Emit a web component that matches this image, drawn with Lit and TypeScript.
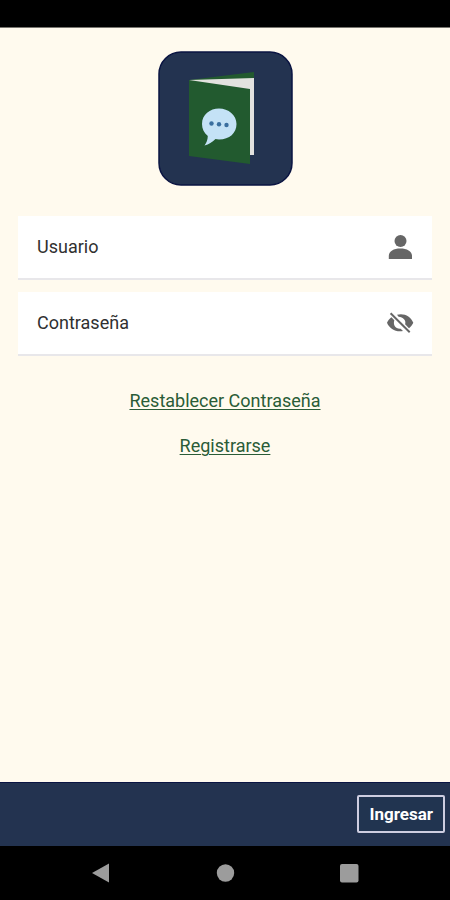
import { LitElement, html, css } from "lit";
import { customElement, state } from "lit/decorators.js";

@customElement("app-root")
export class AppRoot extends LitElement {
  @state() private passwordVisible = false;

  static styles = css`
    :host {
      display: flex;
      flex-direction: column;
      min-height: 100vh;
      background: #fffaee;
      color: #303030;
      font-family: Roboto, "Liberation Sans", sans-serif;
      font-size: 18px;
      line-height: 24px;
    }
    * {
      box-sizing: border-box;
    }
    .status {
      height: 28px;
      background: #000;
      border-bottom: 1px solid #77756f;
    }
    main {
      flex: 1;
      display: flex;
      flex-direction: column;
      align-items: center;
      padding: 23px 18px 24px;
    }
    .logo {
      display: block;
      width: 135px;
      height: 135px;
    }
    form {
      width: 100%;
      display: flex;
      flex-direction: column;
      gap: 12px;
      margin-top: 30px;
    }
    .field {
      display: flex;
      align-items: center;
      gap: 12px;
      height: 64px;
      padding: 0 18px 0 19px;
      background: #fff;
      border-bottom: 2px solid #e8e7ea;
    }
    .field input {
      flex: 1;
      min-width: 0;
      height: 32px;
      padding: 0;
      border: 0;
      outline: 0;
      background: none;
      color: inherit;
      font: inherit;
    }
    .icon {
      display: block;
      width: 28px;
      height: 28px;
      fill: #666;
    }
    .toggle {
      padding: 0;
      border: 0;
      background: none;
      cursor: pointer;
    }
    nav {
      display: flex;
      flex-direction: column;
      align-items: center;
      gap: 21px;
      margin-top: 33px;
    }
    a {
      color: #2a5c37;
      text-decoration: underline;
      text-decoration-thickness: 1px;
      text-underline-offset: 2px;
    }
    .actions {
      display: flex;
      justify-content: flex-end;
      align-items: center;
      height: 64px;
      padding: 0 5px 2px;
      background: #233350;
      border-top: 1px solid #0a1442;
    }
    .submit {
      height: 38px;
      padding: 0 10px;
      border: 2px solid #cdcde0;
      border-radius: 2px;
      background: #213450;
      color: #fff;
      font: bold 17px/20px Roboto, "Liberation Sans", sans-serif;
      cursor: pointer;
    }
    .system {
      display: grid;
      grid-template-columns: repeat(3, 1fr);
      align-items: center;
      height: 54px;
      padding: 0 39px;
      background: #000;
    }
    .key {
      display: flex;
      justify-content: center;
      padding: 0;
      border: 0;
      background: none;
    }
    .glyph {
      display: block;
      width: 20px;
      height: 20px;
      fill: #9c9c9c;
    }
  `;

  private togglePassword() {
    this.passwordVisible = !this.passwordVisible;
  }

  render() {
    return html`
      <div class="status"></div>
      <main>
        <svg class="logo" viewBox="0 0 135 135" aria-hidden="true">
          <rect x="1" y="1" width="133" height="133" rx="22" fill="#233350" stroke="#0a1442" stroke-width="1.5" />
          <path d="M31 29 96 21V30L84 34z" fill="#225a2f" />
          <path d="M31 29 96 27V104H88L60 60z" fill="#e2e2df" />
          <path d="M31 29 92 38V113L31 105z" fill="#225a2f" />
          <path d="M61 57.500c9.500 0 17.500 6.500 17.500 15.500s-7 15.500-17.500 15.500c-1.500 0-2.500-.1-3.500-.4C54 91.500 51 93.500 46.500 94.500c2.200-3 3.200-6 3.300-9.500-3.700-3-5.800-7-5.800-12C44 63.500 52 57.500 61 57.500z" fill="#c4e2f6" />
          <g fill="#3a6f9f">
            <circle cx="53.500" cy="72.500" r="2.200" />
            <circle cx="61" cy="73.300" r="2.200" />
            <circle cx="68.500" cy="74" r="2.200" />
          </g>
        </svg>
        <form id="login" @submit=${(e: Event) => e.preventDefault()}>
          <div class="field">
            <label for="user">Usuario</label>
            <input id="user" type="text" autocomplete="username" />
            <svg class="icon" viewBox="0 0 28 28" aria-hidden="true">
              <circle cx="14.500" cy="8" r="6" />
              <path d="M2.800 26v-3c0-5 5-7.500 11.500-7.500S26 18 26 23v3z" />
            </svg>
          </div>
          <div class="field">
            <label for="password">Contraseña</label>
            <input
              id="password"
              type=${this.passwordVisible ? "text" : "password"}
              autocomplete="current-password"
            />
            <button class="toggle" type="button" aria-label="Mostrar contraseña" @click=${this.togglePassword}>
              <svg class="icon" viewBox="0 0 28 28" aria-hidden="true">
                <path
                  d="M11 5.800C18 3.800 24.800 7.500 27.300 13.700c-1 2.300-2.400 4-4.300 5.500l-3.900-3.900C20.500 11.500 17 7.900 12.600 7.700z"
                />
                <path
                  d="M5.400 8.200C3.400 9.700 1.900 11.600 1 13.700c2.600 6.300 9.200 9.800 16 8.300l-2.300-2.300C9.800 20.300 6.800 16.200 8.300 11.300z"
                />
                <path d="M5.300 3.500 24.400 22.600l-1.400 1.400L3.900 4.900z" />
              </svg>
            </button>
          </div>
        </form>
        <nav>
          <a href="#restablecer">Restablecer Contraseña</a>
          <a href="#registrarse">Registrarse</a>
        </nav>
      </main>
      <div class="actions">
        <button class="submit" type="submit" form="login">Ingresar</button>
      </div>
      <div class="system">
        <button class="key" aria-label="Atrás">
          <svg class="glyph" viewBox="0 0 20 20"><path d="M1 10 18 .5v19z" /></svg>
        </button>
        <button class="key" aria-label="Inicio">
          <svg class="glyph" viewBox="0 0 20 20"><circle cx="10.500" cy="10" r="8.700" /></svg>
        </button>
        <button class="key" aria-label="Recientes">
          <svg class="glyph" viewBox="0 0 20 20"><rect x="1" y="1" width="18.500" height="18.500" rx="2" /></svg>
        </button>
      </div>
    `;
  }
}
